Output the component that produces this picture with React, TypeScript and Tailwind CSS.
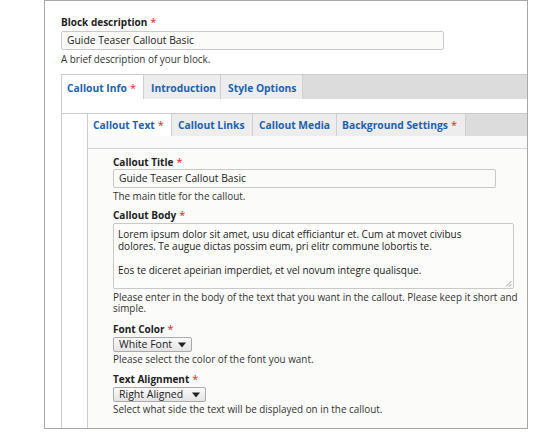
import React from "react";

const Req = () => (
  <span className="text-[#e3211b] ml-[3px] font-normal text-[11px] leading-none">*</span>
);

const tabCls = "h-full border-r border-[#cfcfcf] text-[10.3px] leading-[14px] font-bold text-[#1b63ae] whitespace-nowrap";

function Field({
  label,
  children,
  desc,
  className = "",
}: {
  label: string;
  children: React.ReactNode;
  desc?: React.ReactNode;
  className?: string;
}) {
  return (
    <div className={className}>
      <div className="text-[10px] leading-[13px] font-bold text-[#222]">
        {label}
        <Req />
      </div>
      {children}
      {desc}
    </div>
  );
}

function Select({ value, w }: { value: string; w: string }) {
  return (
    <div
      className={`${w} h-[15px] mt-[1px] border border-[#aaaaaa] rounded-[2px] bg-gradient-to-b from-[#fafafa] to-[#e4e4e4] flex items-center justify-between pl-[5px] pr-[5px] text-[10.5px] leading-[13px] text-[#222]`}
    >
      <span>{value}</span>
      <svg width="8" height="6" viewBox="0 0 8 6">
        <path d="M0 0.5 L8 0.5 L4 5.5 Z" fill="#222" />
      </svg>
    </div>
  );
}

export default function App() {
  return (
    <div className="w-[550px] h-[434px] bg-white overflow-hidden font-['Open_Sans',sans-serif] text-[#333]">
      <div className="ml-[44px] w-[484px] h-[429px] border border-[#a8a8a8] flex flex-col pl-[16px] pt-[15px]">
        <div className="text-[10px] leading-[13px] font-bold text-[#222]">
          Block description
          <Req />
        </div>
        <div className="mt-[2px] w-[383px] h-[19px] border border-[#c9c9c9] bg-[#fbfbf9] rounded-[2px] px-[5px] text-[10.3px] leading-[17px] text-[#222] shrink-0">
          Guide Teaser Callout Basic
        </div>
        <div className="mt-[3px] text-[9.9px] leading-[13px]">A brief description of your block.</div>

        <div className="mt-[8px] flex-1 flex flex-col border-l border-t border-[#cccccc] min-h-0">
          <div className="h-[24px] bg-[#dcdcdc] flex shrink-0">
            <div className={`${tabCls} w-[82px] bg-white pl-[5px] pt-[6px]`}>
              Callout Info
              <Req />
            </div>
            <div className={`${tabCls} w-[77px] bg-[#ededed] pl-[7px] pt-[6px]`}>Introduction</div>
            <div className={`${tabCls} w-[82px] bg-[#ededed] pl-[7px] pt-[6px]`}>Style Options</div>
          </div>

          <div className="flex-1 bg-white pt-[14px] flex flex-col min-h-0">
            <div className="flex-1 flex border-t border-[#cccccc] min-h-0">
              <div className="w-[25px] bg-white shrink-0" />
              <div className="flex-1 flex flex-col border-l border-[#cccccc] min-h-0">
                <div className="h-[22px] bg-[#dcdcdc] flex shrink-0">
                  <div className={`${tabCls} w-[84px] bg-white pl-[5px] pt-[4px]`}>
                    Callout Text
                    <Req />
                  </div>
                  <div className={`${tabCls} w-[81px] bg-[#ededed] pl-[6px] pt-[4px]`}>Callout Links</div>
                  <div className={`${tabCls} w-[84px] bg-[#ededed] pl-[6px] pt-[4px]`}>Callout Media</div>
                  <div className={`${tabCls} w-[129px] bg-[#ededed] pl-[5px] pt-[4px]`}>
                    Background Settings
                    <Req />
                  </div>
                </div>
                <div className="h-[12px] bg-[#fafafa] shrink-0" />
                <div className="flex-1 border-t border-[#d4d4d4] bg-[#fbfbfa] pl-[25px] pt-[7px]">
                  <Field
                    label="Callout Title"
                    desc={<div className="mt-[2px] text-[9.9px] leading-[13px]">The main title for the callout.</div>}
                  >
                    <div className="w-[383px] h-[19px] border border-[#c9c9c9] bg-[#fbfbf9] rounded-[2px] px-[5px] text-[10.3px] leading-[17px] text-[#222]">
                      Guide Teaser Callout Basic
                    </div>
                  </Field>

                  <Field
                    className="mt-[6px]"
                    label="Callout Body"
                    desc={
                      <div className="mt-[3px] text-[9.9px] leading-[11px] whitespace-nowrap">
                        Please enter in the body of the text that you want in the callout. Please keep it short and
                        <br />
                        simple.
                      </div>
                    }
                  >
                    <div className="relative mt-[1px] w-[401px] h-[66px] border border-[#c9c9c9] bg-[#fcfcfa] rounded-[2px] px-[4px] pt-[4px] text-[10px] leading-[12px] text-[#222] whitespace-nowrap">
                      <div>Lorem ipsum dolor sit amet, usu dicat efficiantur et. Cum at movet civibus</div>
                      <div>dolores. Te augue dictas possim eum, pri elitr commune lobortis te.</div>
                      <div className="h-[12px]" />
                      <div>Eos te diceret apeirian imperdiet, et vel novum integre qualisque.</div>
                      <svg className="absolute right-[1px] bottom-[1px]" width="7" height="7" viewBox="0 0 7 7">
                        <path d="M6.5 1 L1 6.5 M6.5 4 L4 6.5" stroke="#999" strokeWidth="1" />
                      </svg>
                    </div>
                  </Field>

                  <Field
                    className="mt-[9px]"
                    label="Font Color"
                    desc={<div className="mt-[1px] text-[9.9px] leading-[13px]">Please select the color of the font you want.</div>}
                  >
                    <Select value="White Font" w="w-[79px]" />
                  </Field>

                  <Field
                    className="mt-[7px]"
                    label="Text Alignment"
                    desc={
                      <div className="mt-[1px] text-[9.9px] leading-[13px]">
                        Select what side the text will be displayed on in the callout.
                      </div>
                    }
                  >
                    <Select value="Right Aligned" w="w-[93px]" />
                  </Field>
                </div>
              </div>
            </div>
          </div>
        </div>
      </div>
    </div>
  );
}
